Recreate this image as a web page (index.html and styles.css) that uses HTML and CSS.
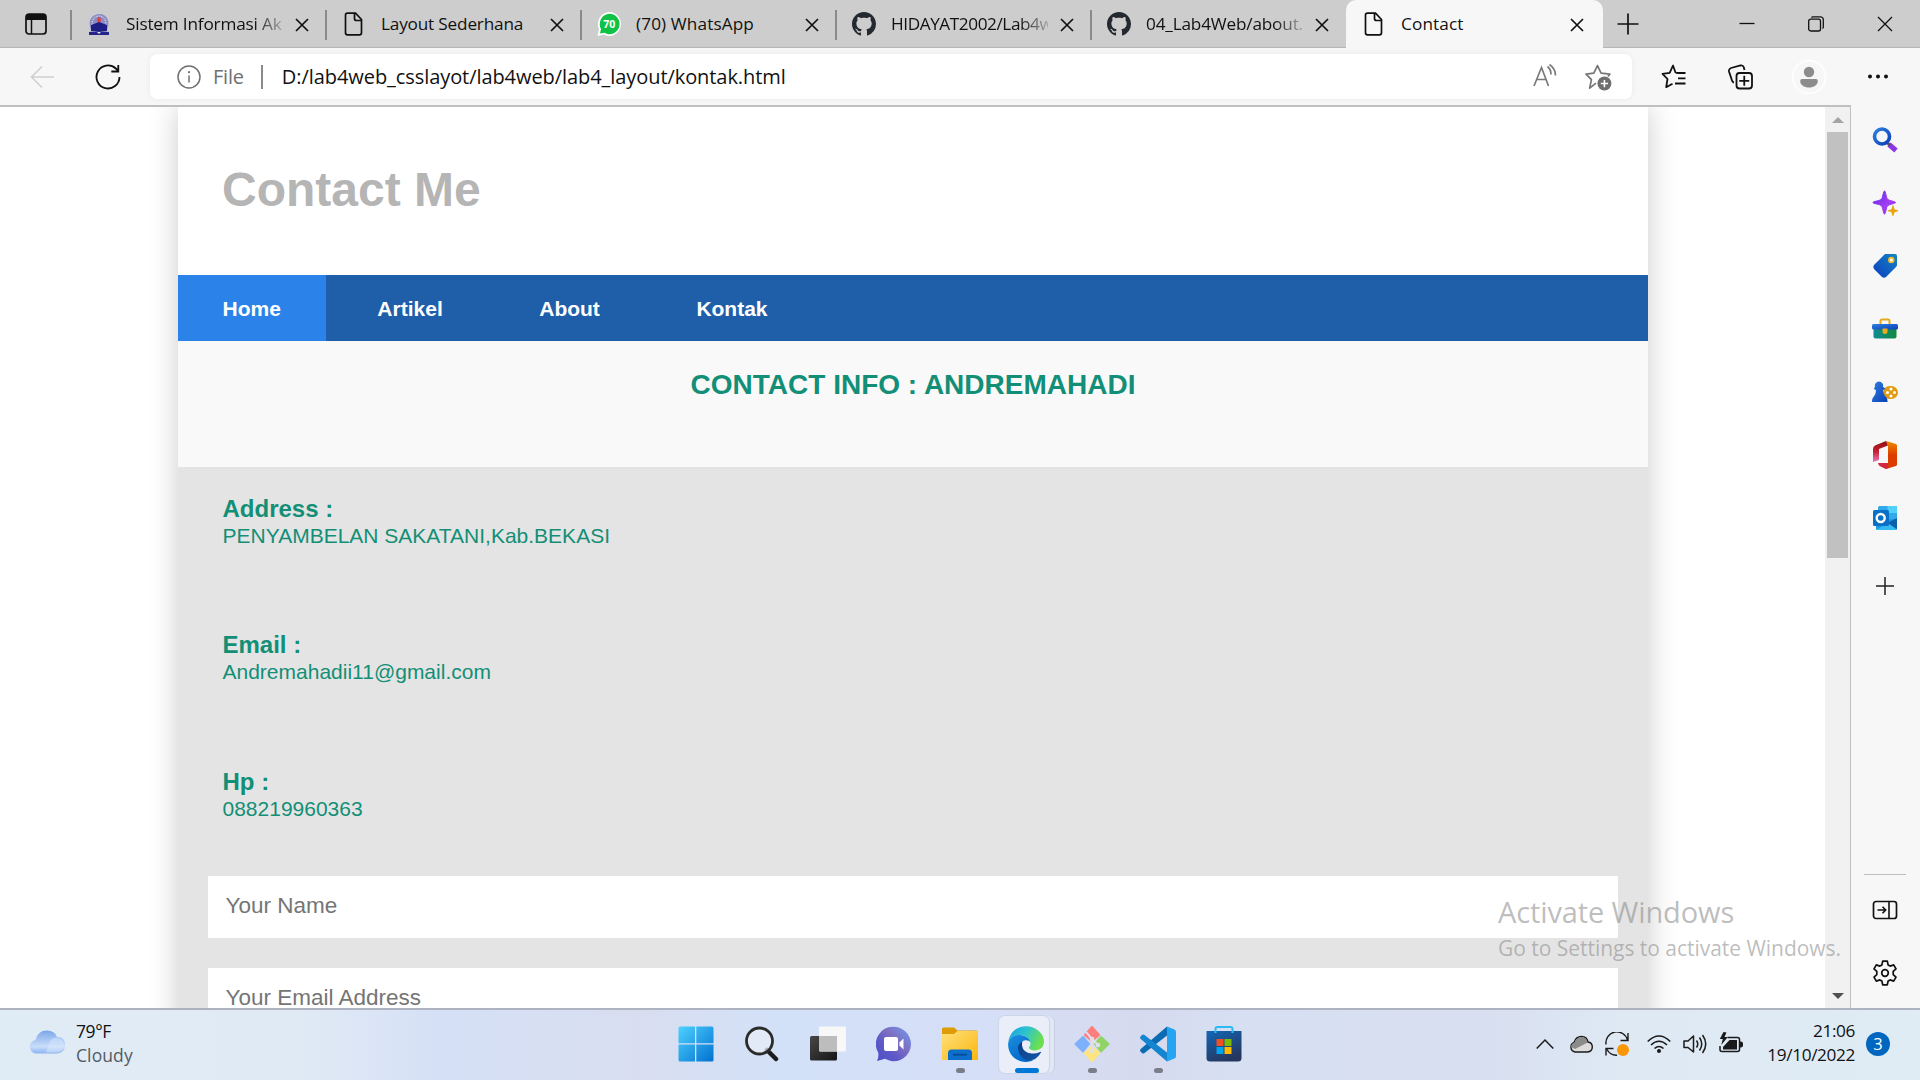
FILE: index.html
```html
<!DOCTYPE html>
<html lang="en">
<head>
<meta charset="utf-8">
<title>Contact</title>
<link rel="stylesheet" href="styles.css">
</head>
<body>
<svg class="defs" width="0" height="0" aria-hidden="true">
  <defs>
    <symbol id="i-page" viewBox="0 0 24 24"><path d="M5.5 1.2h8L19.500 7.500v13.300a2 2 0 0 1-2 2h-12a2 2 0 0 1-2-2V3.200a2 2 0 0 1 2-2zM12.500 1.500v5a2 2 0 0 0 2 2h5" fill="none" stroke="#111" stroke-width="1.700"/></symbol>
    <symbol id="i-close" viewBox="0 0 14 14"><path d="M1 1l12 12M13 1L1 13" fill="none" stroke="#111" stroke-width="1.700"/></symbol>
    <symbol id="i-github" viewBox="0 0 16 16"><path fill="#24292f" d="M8 0C3.580 0 0 3.580 0 8c0 3.540 2.290 6.530 5.470 7.590.4.070.55-.17.55-.38 0-.19-.01-.82-.01-1.490-2.010.37-2.530-.49-2.690-.94-.09-.23-.48-.94-.82-1.130-.28-.15-.68-.52-.01-.53.63-.01 1.080.58 1.230.82.72 1.210 1.870.87 2.330.66.07-.52.28-.87.51-1.070-1.780-.2-3.640-.89-3.640-3.950 0-.87.31-1.590.82-2.150-.08-.2-.36-1.020.08-2.120 0 0 .67-.21 2.200.82.64-.18 1.320-.27 2-.27s1.360.09 2 .27c1.530-1.040 2.200-.82 2.200-.82.44 1.100.16 1.920.08 2.120.51.56.82 1.270.82 2.150 0 3.070-1.870 3.750-3.650 3.950.29.25.54.73.54 1.480 0 1.070-.01 1.930-.01 2.200 0 .21.15.46.55.38A8.010 8.010 0 0 0 16 8c0-4.420-3.580-8-8-8z"/></symbol>
    <linearGradient id="g-win" x1="0" y1="0" x2="36" y2="36" gradientUnits="userSpaceOnUse"><stop offset="0" stop-color="#4fd3ff"/><stop offset="1" stop-color="#0070d0"/></linearGradient>
    <linearGradient id="g-dark" x1="0" y1="0" x2="1" y2="1"><stop offset="0" stop-color="#474747"/><stop offset="1" stop-color="#151515"/></linearGradient>
    <linearGradient id="g-chat" x1="0" y1="1" x2="1" y2="0"><stop offset="0" stop-color="#4a4fc6"/><stop offset=".35" stop-color="#5f59c8"/><stop offset=".6" stop-color="#7d6fc0"/><stop offset="1" stop-color="#6f9cf5"/></linearGradient>
    <linearGradient id="g-folder" x1="0" y1="0" x2="1" y2="1"><stop offset="0" stop-color="#ffe07a"/><stop offset="1" stop-color="#fbb60f"/></linearGradient>
    <linearGradient id="g-edge1" x1="0" y1="0" x2="1" y2=".35"><stop offset="0" stop-color="#1a9ee0"/><stop offset=".5" stop-color="#2bc3d2"/><stop offset="1" stop-color="#6be04f"/></linearGradient>
    <linearGradient id="g-edge2" x1="0" y1="0" x2=".6" y2="1"><stop offset="0" stop-color="#1b8fe0"/><stop offset="1" stop-color="#0067c8"/></linearGradient>
    <linearGradient id="g-edge3" x1="0" y1="0" x2="1" y2="1"><stop offset="0" stop-color="#0d3c87"/><stop offset="1" stop-color="#1159a8"/></linearGradient>
    <linearGradient id="g-store" x1="0" y1="0" x2=".5" y2="1"><stop offset="0" stop-color="#1267b8"/><stop offset="1" stop-color="#26375f"/></linearGradient>
    <linearGradient id="g-weather" x1="0" y1="0" x2="0" y2="1"><stop offset="0" stop-color="#7ba6ea"/><stop offset=".7" stop-color="#c9defa"/><stop offset="1" stop-color="#8bb2f0"/></linearGradient>
    <linearGradient id="g-spark" x1="0" y1="0" x2="1" y2="1"><stop offset="0" stop-color="#5b2be0"/><stop offset=".6" stop-color="#a33cf5"/><stop offset="1" stop-color="#7a2be8"/></linearGradient>
    <linearGradient id="g-blue" x1="0" y1="0" x2="1" y2="1"><stop offset="0" stop-color="#2f7fe0"/><stop offset="1" stop-color="#0a3fb8"/></linearGradient>
    <linearGradient id="g-tag" x1="0" y1="1" x2="1" y2="0"><stop offset="0" stop-color="#0b3fc0"/><stop offset="1" stop-color="#1583c4"/></linearGradient>
    <linearGradient id="g-tool" x1="0" y1="0" x2="1" y2="0"><stop offset="0" stop-color="#118a96"/><stop offset="1" stop-color="#128a3c"/></linearGradient>
    <linearGradient id="g-off1" x1="0" y1="0" x2="0" y2="1"><stop offset="0" stop-color="#f08a00"/><stop offset=".5" stop-color="#dd3c00"/></linearGradient>
    <linearGradient id="g-off2" x1="0" y1="0" x2="0" y2="1"><stop offset="0" stop-color="#8c0f12"/><stop offset=".5" stop-color="#c62033"/><stop offset="1" stop-color="#e57bc0"/></linearGradient>
  </defs>
</svg>

<div class="desktop">
  <header class="tabbar">
    <svg class="tab-actions" viewBox="0 0 22 22"><rect x="1" y="1" width="20" height="20" rx="3" fill="none" stroke="#111" stroke-width="1.700"/><path d="M1 7V4a3 3 0 0 1 3-3h14a3 3 0 0 1 3 3v3z" fill="#111"/><path d="M6.500 6v15" stroke="#111" stroke-width="1.500"/></svg>
    <div class="tab">
      <svg class="fav" viewBox="0 0 24 24"><path d="M4 18C0 8 5 2.500 12 2s12 6 8 16z" fill="#8b8dc4"/><path d="M5 13c0-6 3-9 7-9s7 3 7 9" fill="none" stroke="#dfe0f2" stroke-width="1" stroke-dasharray="1.500 1"/><path d="M12 5c-2 2-2 4 0 6 2-2 2-4 0-6z" fill="#e2413c" stroke="#e2413c"/><path d="M4 13l8-3 8 3v6H4z" fill="#1e1f84"/><path d="M2 20l10-1 10 1v3H2z" fill="#23258a"/><path d="M10 20h4l-2 2z" fill="#e8e8f4"/></svg>
      <span class="tab-title fade tight-1">Sistem Informasi Ak</span>
      <svg class="x"><use href="#i-close"/></svg>
    </div>
    <div class="tab">
      <svg class="fav"><use href="#i-page"/></svg>
      <span class="tab-title tight-1">Layout Sederhana</span>
      <svg class="x"><use href="#i-close"/></svg>
    </div>
    <div class="tab">
      <svg class="fav" viewBox="0 0 24 24"><path d="M12.500 0A11.500 12 0 1 1 7 22.600L.5 24 2 17A12 12 0 0 1 12.500 0z" fill="#fff"/><path d="M12.500 1.800A10 10.200 0 1 1 7.500 20.800L3 21.500l1-4.500A10 10.200 0 0 1 12.500 1.800z" fill="#0fc144"/><text x="12.300" y="16" text-anchor="middle" class="badge70">70</text></svg>
      <span class="tab-title loose">(70) WhatsApp</span>
      <svg class="x"><use href="#i-close"/></svg>
    </div>
    <div class="tab">
      <svg class="fav"><use href="#i-github"/></svg>
      <span class="tab-title fade tight-2">HIDAYAT2002/Lab4w</span>
      <svg class="x"><use href="#i-close"/></svg>
    </div>
    <div class="tab">
      <svg class="fav"><use href="#i-github"/></svg>
      <span class="tab-title fade tight-1">04_Lab4Web/about.</span>
      <svg class="x"><use href="#i-close"/></svg>
    </div>
    <div class="tab active">
      <svg class="fav"><use href="#i-page"/></svg>
      <span class="tab-title loose">Contact</span>
      <svg class="x"><use href="#i-close"/></svg>
    </div>
    <svg class="new-tab" viewBox="0 0 22 22"><path d="M11 .5v21M.5 11h21" stroke="#111" stroke-width="1.700"/></svg>
    <div class="win-controls">
      <svg viewBox="0 0 16 16"><path d="M.5 7.500h15" stroke="#111" stroke-width="1.300"/></svg>
      <svg viewBox="0 0 16 16"><path d="M.7 5.200a2 2 0 0 1 2-2h7.800a2 2 0 0 1 2 2V13a2 2 0 0 1-2 2H2.700a2 2 0 0 1-2-2zM3.500 1.500Q4 .8 5 .8h7.500a2.800 2.800 0 0 1 2.800 2.800v7.400q0 1-.8 1.500" fill="none" stroke="#111" stroke-width="1.300"/></svg>
      <svg viewBox="0 0 16 16"><path d="M1 1l14 14M15 1L1 15" stroke="#111" stroke-width="1.300"/></svg>
    </div>
  </header>

  <div class="toolbar">
    <svg class="back" viewBox="0 0 24 24"><path d="M12 1.500L1.500 12 12 22.500M1.500 12H24" fill="none" stroke="#cfcfcf" stroke-width="1.600"/></svg>
    <svg class="reload" viewBox="0 0 26 26"><path d="M24.500 13A11.500 11.500 0 1 1 20.800 4.500L23 6.500M23.300 1v6.500h-7" fill="none" stroke="#111" stroke-width="1.800"/></svg>
    <div class="address">
      <svg class="info" viewBox="0 0 24 24"><circle cx="12" cy="12" r="11" fill="none" stroke="#707070" stroke-width="1.500"/><path d="M12 10.500v7" stroke="#707070" stroke-width="1.500"/><circle cx="12" cy="7.200" r="1.100" fill="#707070"/></svg>
      <span class="scheme">File</span>
      <span class="bar"></span>
      <span class="url">D:/lab4web_csslayot/lab4web/lab4_layout/kontak.html</span>
      <svg class="read" viewBox="0 0 24 24"><path d="M1 22L8.500 3.500 15.500 22M3.700 15.500h9.500M14.500 2.500q3.500 3 3.500 8M16.500.5q6 4 6 11" fill="none" stroke="#7a7a7a" stroke-width="1.700"/></svg>
      <svg class="star" viewBox="0 0 26 26"><path d="M10.500 18.500l-6 4.800 1.700-8.300L1 9.800l7.500-1L12 1.500l3.500 7.300 8.500 1-2 2.200" fill="none" stroke="#757575" stroke-width="1.600" stroke-linejoin="round"/><circle cx="18.700" cy="18.800" r="6.700" fill="#6e6e6e"/><path d="M18.700 15.300v7M15.200 18.800h7" stroke="#fff" stroke-width="1.500"/></svg>
    </div>
    <div class="tools">
      <svg viewBox="0 0 26 26"><path d="M24.500 9h-8.500l-1.500-.5L12 1.500 8.700 8.800l-7.200 1L6.500 15l-1.300 8.200 6.300-3.500M17 14.300h7.500M14 19.500h10.500" fill="none" stroke="#111" stroke-width="1.800" stroke-linejoin="round"/></svg>
      <svg viewBox="0 0 26 26"><rect x="9.500" y="9" width="15.500" height="15.500" rx="3" fill="none" stroke="#111" stroke-width="1.800"/><path d="M17.250 11.800v10M12.250 16.800h10M7 18.500q-1.500-.3-2-2L2 7.500Q1.500 5 4 4l9.500-2.500q2.500-.5 3.300 1.800l.7 2.700" fill="none" stroke="#111" stroke-width="1.800"/></svg>
      <svg class="avatar" viewBox="0 0 34 34"><circle cx="17" cy="17" r="16.500" fill="#f7f7f7" stroke="#fff" stroke-width="1.500"/><circle cx="17" cy="12" r="5.200" fill="#8c8c8c"/><path d="M10.200 19h13.600a2 2 0 0 1 2 2c0 4-4 6.500-8.800 6.500S8.200 25 8.200 21a2 2 0 0 1 2-2z" fill="#8c8c8c"/></svg>
      <svg viewBox="0 0 26 26"><circle cx="5" cy="12.500" r="2" fill="#111"/><circle cx="13" cy="12.500" r="2" fill="#111"/><circle cx="21" cy="12.500" r="2" fill="#111"/></svg>
    </div>
  </div>

  <div class="content">
    <div class="webview">
      <main class="page">
        <div class="container">
          <div class="masthead"><h1>Contact Me</h1></div>
          <nav class="nav">
            <a class="current">Home</a>
            <a>Artikel</a>
            <a>About</a>
            <a>Kontak</a>
          </nav>
          <section class="hero"><h3>CONTACT INFO : ANDREMAHADI</h3></section>
          <dl class="details">
            <div><dt>Address :</dt><dd>PENYAMBELAN SAKATANI,Kab.BEKASI</dd></div>
            <div><dt>Email :</dt><dd>Andremahadii11@gmail.com</dd></div>
            <div><dt>Hp :</dt><dd>088219960363</dd></div>
          </dl>
          <form class="form">
            <input type="text" placeholder="Your Name">
            <input type="text" placeholder="Your Email Address">
          </form>
        </div>
      </main>
      <div class="scrollbar">
        <svg viewBox="0 0 12 6"><path d="M0 6L6 0l6 6z" fill="#a3a3a3"/></svg>
        <div class="thumb"></div>
        <svg class="down" viewBox="0 0 12 6"><path d="M0 0h12L6 6z" fill="#505050"/></svg>
      </div>
    </div>
    <aside class="sidebar">
      <svg viewBox="0 0 26 26"><path d="M17 17.500l7 6" stroke="#8b35e8" stroke-width="5"/><path d="M15.500 16l2.500 2.300" stroke="#555" stroke-width="3"/><circle cx="10" cy="9.500" r="7.500" fill="#f4f8fc" stroke="url(#g-blue)" stroke-width="3.600"/></svg>
      <svg viewBox="0 0 26 26"><path d="M12.500 1c1.300 0 1.500 7 3.500 8.500s7.500 1.800 7.500 3-5.500 1.500-7.500 3-2.200 8.500-3.500 8.500-1.500-7-3.500-8.500S1 13.700 1 12.500 7 11 9 9.500 11.200 1 12.500 1z" fill="url(#g-spark)" stroke="url(#g-spark)"/><path d="M21 15c.8 0 1 3.500 1.700 4.200S26.500 20 26.500 20.700s-3 .8-3.800 1.500-1 4.300-1.700 4.300-.9-3.500-1.700-4.300-3.800-.8-3.800-1.500 3-.8 3.800-1.500S20.300 15 21 15z" fill="#e9a60c"/></svg>
      <svg viewBox="0 0 26 26"><path d="M13 1h10q2 0 2 2v9q0 1-1 2L14 24q-2 1.500-4 0l-8-8q-1.500-2 0-4z" fill="url(#g-tag)"/><circle cx="19.300" cy="7" r="2.400" fill="#fff" stroke="#f2b91f" stroke-width="1.700"/></svg>
      <svg viewBox="0 0 26 26"><path d="M8.500 8V5q0-1.500 1.500-1.500h6q1.500 0 1.500 1.500v3" fill="none" stroke="#e6a91c" stroke-width="2"/><path d="M1.500 12h23v8.500q0 2-2 2h-19q-2 0-2-2z" fill="url(#g-tool)"/><rect x="0" y="8" width="26" height="5.500" rx="1.500" fill="url(#g-blue)"/><path d="M10.500 12.500h5v3a2.500 2.500 0 0 1-5 0z" fill="#e9ac1a"/></svg>
      <svg viewBox="0 0 26 26"><rect x="11" y="7" width="15" height="13" rx="6.500" fill="#e09c10"/><g fill="#fff"><circle cx="19" cy="10" r="1.500"/><circle cx="19" cy="17" r="1.500"/><circle cx="15.500" cy="13.500" r="1.500"/><circle cx="22.500" cy="13.500" r="1.500"/></g><path d="M3 8a4.200 4.200 0 1 1 8 0q2 .5 2 1.500t-2 1.500q.5 5 3 7 1.500 1 1.500 5H0q0-4 1.500-5Q4 15.500 4 11 2 10.500 2 9.500T3 8z" fill="url(#g-blue)"/></svg>
      <svg class="office" viewBox="0 0 26 30"><path d="M14 1l10 3q1 .5 1 1.500v19q0 1-1 1.500l-10 3-7-3.500h9V5.500z" fill="url(#g-off1)"/><path d="M14 1l2 4.500-9 3.500v11l-6 2V9q0-2.500 2-3.500z" fill="url(#g-off2)"/><path d="M6 23h10v5l-2 1-7-3.500z" fill="#d32742"/></svg>
      <svg viewBox="0 0 26 26"><rect x="6" y="1" width="19" height="14" rx="1.500" fill="#32a9e8"/><path d="M15.500 1H25v7h-9.500z" fill="#50d0fa"/><path d="M4 14h21v9.500a1.500 1.500 0 0 1-1.500 1.500h-18A1.500 1.500 0 0 1 4 23.500z" fill="#1a9be0"/><path d="M25 13v11L15 18z" fill="#0d5fa8"/><path d="M4 25h21l-9-7z" fill="#35b9f1"/><rect x="1" y="5" width="16" height="16" rx="1.500" fill="#0a6fc9"/><circle cx="8.700" cy="13" r="4" fill="none" stroke="#fff" stroke-width="2.400"/></svg>
      <svg class="add" viewBox="0 0 26 26"><path d="M13 4v18M4 13h18" stroke="#222" stroke-width="1.500"/></svg>
      <hr>
      <svg viewBox="0 0 26 26"><rect x="1.500" y="4.500" width="23" height="17" rx="2.500" fill="none" stroke="#111" stroke-width="1.700"/><path d="M17 4.500v17M5.500 13h8M10.500 9.800l3.200 3.200-3.200 3.200" fill="none" stroke="#111" stroke-width="1.600"/></svg>
      <svg class="gear" viewBox="0 0 26 26"><path d="M10.700 1.200h4.600l.8 3.700 2 1.200 3.600-1.200 2.300 4-2.800 2.500v3.200l2.800 2.500-2.300 4-3.600-1.200-2 1.200-.8 3.700h-4.600l-.8-3.700-2-1.200-3.600 1.200-2.300-4 2.800-2.500v-3.200L2 8.900l2.300-4 3.600 1.200 2-1.200z" fill="none" stroke="#111" stroke-width="1.700" stroke-linejoin="round"/><circle cx="13" cy="13" r="3.300" fill="none" stroke="#111" stroke-width="1.700"/></svg>
    </aside>
  </div>

  <footer class="taskbar">
    <div class="weather">
      <svg viewBox="0 0 36 24"><path d="M7 23.500a6.800 6.800 0 0 1-.5-13.500Q9 .5 17.500.5T28 7q8 0 8 8t-8 8.500z" fill="url(#g-weather)"/><path d="M20 14q1-6 7.500-6.500 7.500.5 7.500 7.500t-7 7.500H17z" fill="#d8e8fc" opacity=".55"/></svg>
      <div><div class="temp">79°F</div><div class="dim">Cloudy</div></div>
    </div>
    <div class="apps">
      <div class="app"><svg viewBox="0 0 36 36"><g fill="url(#g-win)"><path d="M2 .5h15v16.700H.5V2Q.5.5 2 .5z"/><path d="M18.300.5H34q1.500 0 1.500 1.500v15.200H18.300z"/><path d="M.5 18.500H17v17H2Q.5 35.500.5 34z"/><path d="M18.300 18.500h17.200V34q0 1.500-1.500 1.500H18.300z"/></g></svg></div>
      <div class="app"><svg viewBox="0 0 36 36"><path d="M23 24l9 9" stroke="#1c1c1c" stroke-width="4.500" stroke-linecap="round"/><circle cx="15.500" cy="15" r="13" fill="#e8eef8" fill-opacity=".7" stroke="#2b2b2b" stroke-width="2.800"/></svg></div>
      <div class="app"><svg viewBox="0 0 36 36"><rect x="0" y="10" width="27" height="24.500" rx="1.500" fill="url(#g-dark)"/><rect x="9" y=".5" width="27" height="25" rx="1.500" fill="#f8f8f8"/><path d="M9 10h18v15.500H10.500Q9 25.500 9 24z" fill="#bdbdbd"/></svg></div>
      <div class="app"><svg viewBox="0 0 36 36"><path d="M18 .8a17.200 17.200 0 1 1-9 32L1 35q2-4 1.200-8.500A17.200 17.200 0 0 1 18 .8z" fill="url(#g-chat)"/><rect x="8" y="11" width="14" height="14" rx="2" fill="#fff"/><path d="M23.500 16.500l4-4v11l-4-4z" fill="#fff"/></svg></div>
      <div class="app open"><svg viewBox="0 0 36 36"><path d="M0 3q0-1.500 1.500-1.500H12l3.500 3H34.500Q36 4.500 36 6v5H0z" fill="#de9b06"/><path d="M0 8h12l3.500-3H36v29H0z" fill="url(#g-folder)"/><path d="M6 34v-7q0-3.500 3.500-3.500h17Q30 23.500 30 27v7z" fill="#0b6fcb"/><path d="M11 28.700h14" stroke="#0a4a94" stroke-width="1.800"/></svg></div>
      <div class="app open focus"><svg viewBox="0 0 36 36"><path d="M.3 16C1.500 6.500 9 .2 18 .2 28 .2 36 7.500 36 15.500c0 5.500-4 9-9 9-4 0-6-1.500-6-2.700 0-1 1.500-1.800 1.500-4.300 0-3.500-3.500-8.500-11-8.500C6.500 9 2 12 .3 16z" fill="url(#g-edge1)"/><path d="M.2 17C1.500 12 6 9 11.500 9 18 9 22 13 22.400 16.500 20.500 13 14 13.500 12 18c-2.500 6 1 13.500 8.500 15.500q3 .8 6 0Q23 35.800 18 36C8 36-.8 28 .2 17z" fill="url(#g-edge2)"/><path d="M14.500 15q-5 3-4.500 8 1 8 9 11.500 9 .8 14-8 .3-1-1-.5-4 2-8.500 1.500-8.500-1-9.500-8-.2-2.500.5-4.500z" fill="url(#g-edge3)"/></svg></div>
      <div class="app open"><svg viewBox="0 0 36 36"><g stroke-linejoin="round" stroke-width="2"><path d="M18 1l7 8-7 6-7-6z" fill="#fd7e7c" stroke="#fd7e7c"/><path d="M9 11l6 7-6 7.500L1.500 18z" fill="#7fb0fa" stroke="#7fb0fa"/><path d="M27 11l7.500 7L27 25.500 21 18z" fill="#90d466" stroke="#90d466"/><path d="M18 21l7 6-7 8-7-8z" fill="#ffe57d" stroke="#ffe57d"/></g><path d="M12 6l6 7v12M18 13l6 6" stroke="#dfe0ea" stroke-width="2" fill="none"/><circle cx="18" cy="13" r="2.300" fill="#dfe0ea"/><circle cx="24" cy="19" r="2.300" fill="#dfe0ea"/><circle cx="18" cy="25" r="2.300" fill="#dfe0ea"/></svg></div>
      <div class="app open"><svg viewBox="0 0 36 36"><path d="M27 .5v9L4.500 27q-1.500 1-2.500 0l-1.500-1.500Q-.5 24.300.7 23z" fill="#0b6cb4"/><path d="M27 35.500v-9L4.500 9Q3 8 2 9L.5 10.500Q-.5 11.700.7 13z" fill="#1485cf"/><path d="M27 .5l7.500 3Q36 4 36 6v24q0 2-1.500 2.500l-7.500 3z" fill="#25a4f2"/></svg></div>
      <div class="app"><svg viewBox="0 0 36 36"><path d="M9.500 7V3Q9.500 1 11.500 1h13q2 0 2 2v4" fill="none" stroke="#2cb9f4" stroke-width="2"/><path d="M.5 5h35v27q0 3.500-3.500 3.500H4Q.5 35.500.5 32z" fill="url(#g-store)"/><path d="M9.500 5V7M26.500 5v2" stroke="#2cb9f4" stroke-width="2"/><path d="M10.500 13h7v7h-7z" fill="#f25022"/><path d="M18.500 13h7v7h-7z" fill="#7fba00"/><path d="M10.500 21h7v7h-7z" fill="#00a4ef"/><path d="M18.500 21h7v7h-7z" fill="#ffb900"/></svg></div>
    </div>
    <div class="tray">
      <svg class="chev" viewBox="0 0 18 24"><path d="M.7 16.500L9 8l8.300 8.500" fill="none" stroke="#1a1a1a" stroke-width="1.500"/></svg>
      <svg class="t1" viewBox="0 0 24 24"><path d="M6 20a5 5 0 0 1-1-9.500Q7 4.500 12.500 4.500T19 10q4.300.5 4.300 5T18.500 20z" fill="#dcdcdc" stroke="#1a1a1a" stroke-width="1.400"/><path d="M5.500 10.500Q7.500 5 12.500 5t6 5.500L12 14 6 17l-4-2q.5-4 3.500-4.500z" fill="#8b8b8b"/></svg>
      <svg class="t2" viewBox="0 0 24 24"><path d="M1 12.500A11 11 0 0 1 22.500 8M23 1v7.500h-7.500M12 23.300A11 11 0 0 1 2 17.500M1 23.500v-7h7.500" fill="none" stroke="#1a1a1a" stroke-width="1.400"/><circle cx="18" cy="18" r="6" fill="#fb9605"/></svg>
      <svg class="t3" viewBox="0 0 24 24"><path d="M.7 9.500Q12-1.500 23.300 9.500M4 13q8-7.500 16 0M7.500 16.500q4.500-4 9 0" fill="none" stroke="#1a1a1a" stroke-width="1.600"/><circle cx="12" cy="19" r="2" fill="#1a1a1a"/></svg>
      <svg class="t4" viewBox="0 0 24 24"><path d="M1 9h4l5.500-5v16L5 15.500H1zM13.500 8.500q2.500 3.500 0 7M16.500 5.500q4.500 6.500 0 13M19.500 3q6.500 9 0 18" fill="none" stroke="#1a1a1a" stroke-width="1.500" stroke-linejoin="round"/></svg>
      <svg class="t5" viewBox="0 0 24 24"><path d="M8.500 5.500h10q2 0 2 2v10q0 2-2 2H3q-2 0-2-2v-3.500" fill="none" stroke="#1a1a1a" stroke-width="1.500"/><path d="M10.500 8h7.500v9.500H4v-2.500zM21 9.500h.8q2.200 0 2.200 2v2q0 2-2.200 2H21z" fill="#1a1a1a"/><path d="M4.500 0L.8 7h3L2.300 13 8.800 5H5.500L7.500.5z" fill="#1a1a1a"/></svg>
      <div class="clock"><div>21:06</div><div>19/10/2022</div></div>
      <div class="notif">3</div>
    </div>
  </footer>
</div>

<div class="watermark">
  <div class="wm-title">Activate Windows</div>
  <div class="wm-sub">Go to Settings to activate Windows.</div>
</div>
</body>
</html>
```

FILE: styles.css
```css
* { box-sizing: border-box; margin: 0; padding: 0; }
body { width: 1920px; height: 1080px; overflow: hidden; background: #f7f7f7; font-family: "Open Sans", "Noto Sans", sans-serif; color: #111; }
svg { display: block; flex: none; }
.defs { position: absolute; }
.desktop { display: flex; flex-direction: column; height: 1080px; }

/* tab strip */
.tabbar { display: flex; align-items: center; height: 48px; background: #cdcdcd; box-shadow: inset 0 -2px 1px -1px #b4b4b4; }
.tab-actions { width: 22px; height: 22px; margin: 0 24px 0 25px; }
.tab { display: flex; align-items: center; width: 255px; height: 48px; }
.tab::before { content: ""; width: 2px; height: 30px; margin: 2px 14px 0 -1px; background: #8a8a8a; }
.fav { width: 24px; height: 24px; margin-left: 1px; }
.tab-title { width: 157px; margin: 0 12px 0 15px; overflow: hidden; white-space: nowrap; font-size: 17.200px; line-height: 24px; }
.fade { -webkit-mask-image: linear-gradient(90deg, #000 128px, transparent 164px); mask-image: linear-gradient(90deg, #000 128px, transparent 164px); }
.tight-1 { letter-spacing: -.18px; }
.tight-2 { letter-spacing: -.42px; }
.loose { letter-spacing: .12px; }
.x { width: 14px; height: 14px; margin-top: 1px; }
.badge70 { font: 700 10.500px "Open Sans", sans-serif; fill: #fff; }
.active { width: 257px; background: #f7f7f7; border-radius: 10px 10px 0 0; }
.active::before { background: transparent; }
.new-tab { width: 22px; height: 22px; margin: -1px 0 0 14px; }
.win-controls { display: flex; gap: 53px; margin-left: auto; padding-right: 27px; }
.win-controls svg { width: 16px; height: 16px; }

/* toolbar */
.toolbar { display: flex; align-items: center; height: 57px; background: #f7f7f7; }
.back { width: 24px; height: 24px; margin-left: 30px; }
.reload { width: 26px; height: 26px; margin: 0 29px 0 41px; }
.address { display: flex; flex: none; align-items: center; width: 1482px; height: 45px; padding-left: 27px; background: #fff; border-radius: 7px; box-shadow: 0 0 6px rgba(0, 0, 0, .06); }
.info { width: 24px; height: 24px; }
.scheme { margin: 0 17px 0 12px; font-size: 20px; letter-spacing: -.2px; color: #707070; }
.bar { width: 2px; height: 24px; background: #8a8a8a; }
.url { margin: 0 auto 0 19px; font-size: 20px; letter-spacing: -.07px; }
.read { width: 24px; height: 24px; margin-top: -2px; }
.star { width: 27px; height: 27px; margin: 2px 20px 0 28px; }
.tools { display: flex; flex: none; align-items: center; margin-left: 29px; }
.tools svg { width: 26px; height: 26px; margin-right: 40px; }
.tools .avatar { width: 34px; height: 34px; margin: 0 39px 0 -1px; }
.tools svg:last-child { margin-right: 0; }

/* viewport */
.content { display: flex; height: 903px; }
.webview { display: flex; width: 1851px; background: #fff; border-top: 2px solid #bfbfbf; border-right: 1px solid #bfbfbf; }
.page { width: 1825px; height: 901px; overflow: hidden; font-family: "Liberation Sans", Arial, sans-serif; }
.container { width: 1470px; height: 1300px; margin: 0 0 0 178px; background: #e4e4e4; box-shadow: 0 0 28px #ccc; }
.masthead { display: flex; align-items: center; height: 168px; padding: 0 45px 2px 44px; background: #fff; }
h1 { font-size: 48px; line-height: 56px; color: #b5b5b5; }
.nav { display: flex; gap: 6.500px; height: 66px; background: #1f5faa; }
.nav a { padding: 1px 45px 0; font-size: 21px; font-weight: 700; line-height: 66px; color: #fff; }
.nav .current { padding-left: 44.500px; background: #2b83ea; }
.hero { height: 126px; padding-top: 28px; background: #f9f9f9; text-align: center; color: #128f76; }
h3 { font-size: 28px; line-height: 32px; }
.details { display: flex; flex-direction: column; gap: 82.500px; padding: 27.700px 45px 0 44.500px; color: #128f76; }
dt { font-size: 24px; font-weight: 700; line-height: 28px; }
dd { font-size: 21px; line-height: 26px; }
.form { display: flex; flex-direction: column; gap: 30px; margin: 54px 30px 0; }
.form input { height: 62px; padding: 0 17.500px 2px; border: 0; background: #fff; font: 22.500px "Liberation Sans", Arial, sans-serif; }
.form input::placeholder { color: #757575; }
.scrollbar { display: flex; flex-direction: column; align-items: center; width: 25px; padding: 10px 0 9px; background: #f1f1f1; }
.scrollbar svg { width: 12px; height: 6px; }
.thumb { width: 21px; height: 426px; margin-top: 9px; background: #c1c1c1; }
.scrollbar .down { margin-top: auto; }

/* browser sidebar */
.sidebar { display: flex; flex-direction: column; align-items: center; gap: 37px; width: 69px; padding: 22px 1px 0 0; background: #f7f7f7; }
.sidebar svg { width: 26px; height: 26px; }
.sidebar .office { height: 30px; margin: -2px 0; }
.sidebar .add { margin-top: 5px; }
.sidebar hr { width: 42px; height: 1px; margin: auto 0 -15px; border: 0; background: #bdbdbd; }
.sidebar .gear { margin-bottom: 22px; }

/* taskbar */
.taskbar { display: flex; height: 72px; border-top: 2px solid #adb3c0; background: linear-gradient(90deg, #e0ecf5 0, #e0eaf5 300px, #d5e0f6 440px, #d8def0 640px, #d3e1f8 780px, #d5dff7 980px, #d6daee 1140px, #d6e0f2 1240px, #d8dff0 1480px, #dee9f4 1620px, #e0ecf4 1920px); }
.weather { display: flex; width: 663px; padding: 9px 0 0 29px; font-size: 17.500px; line-height: 24px; }
.weather svg { width: 36px; height: 24px; margin: 11px 11px 0 0; }
.temp { letter-spacing: -.4px; }
.dim { letter-spacing: .1px; color: #555b63; }
.apps { display: flex; }
.app { position: relative; display: flex; justify-content: center; width: 66px; padding-top: 16px; }
.app svg { position: relative; width: 36px; height: 36px; }
.open::after { content: ""; position: absolute; left: 29px; top: 58px; width: 9px; height: 5px; border-radius: 3px; background: #7a7e88; }
.focus::before { content: ""; position: absolute; left: 6px; top: 6px; width: 50px; height: 57px; border-radius: 6px; background: #e9eef9; box-shadow: 0 0 0 1px #cdd5e8, 5px 0 0 0 #e2e7f5, 6px 0 0 0 #c8cfe2; }
.focus::after { left: 22px; width: 24px; background: #0078d7; }
.tray { display: flex; align-items: flex-start; margin-left: auto; padding: 22px 30px 0 0; }
.tray svg { width: 24px; height: 24px; }
.tray .chev { width: 18px; margin-right: 15px; }
.t1, .t3, .t4 { margin-right: 12px; }
.t2 { margin-right: 18px; }
.clock { width: 112px; margin-top: -13px; text-align: right; font-size: 17.200px; letter-spacing: -.35px; line-height: 24px; white-space: nowrap; }
.notif { width: 24px; height: 24px; margin-left: 11px; border-radius: 50%; background: #0067c0; color: #fff; font-size: 16.500px; line-height: 23px; text-align: center; }

/* activation notice over the desktop */
.watermark { position: absolute; left: 1498px; top: 891px; color: rgba(140, 140, 140, .58); white-space: nowrap; }
.wm-title { font-size: 29px; letter-spacing: -.12px; line-height: 42px; }
.wm-sub { font-size: 21px; line-height: 30px; letter-spacing: -.03px; }
```
